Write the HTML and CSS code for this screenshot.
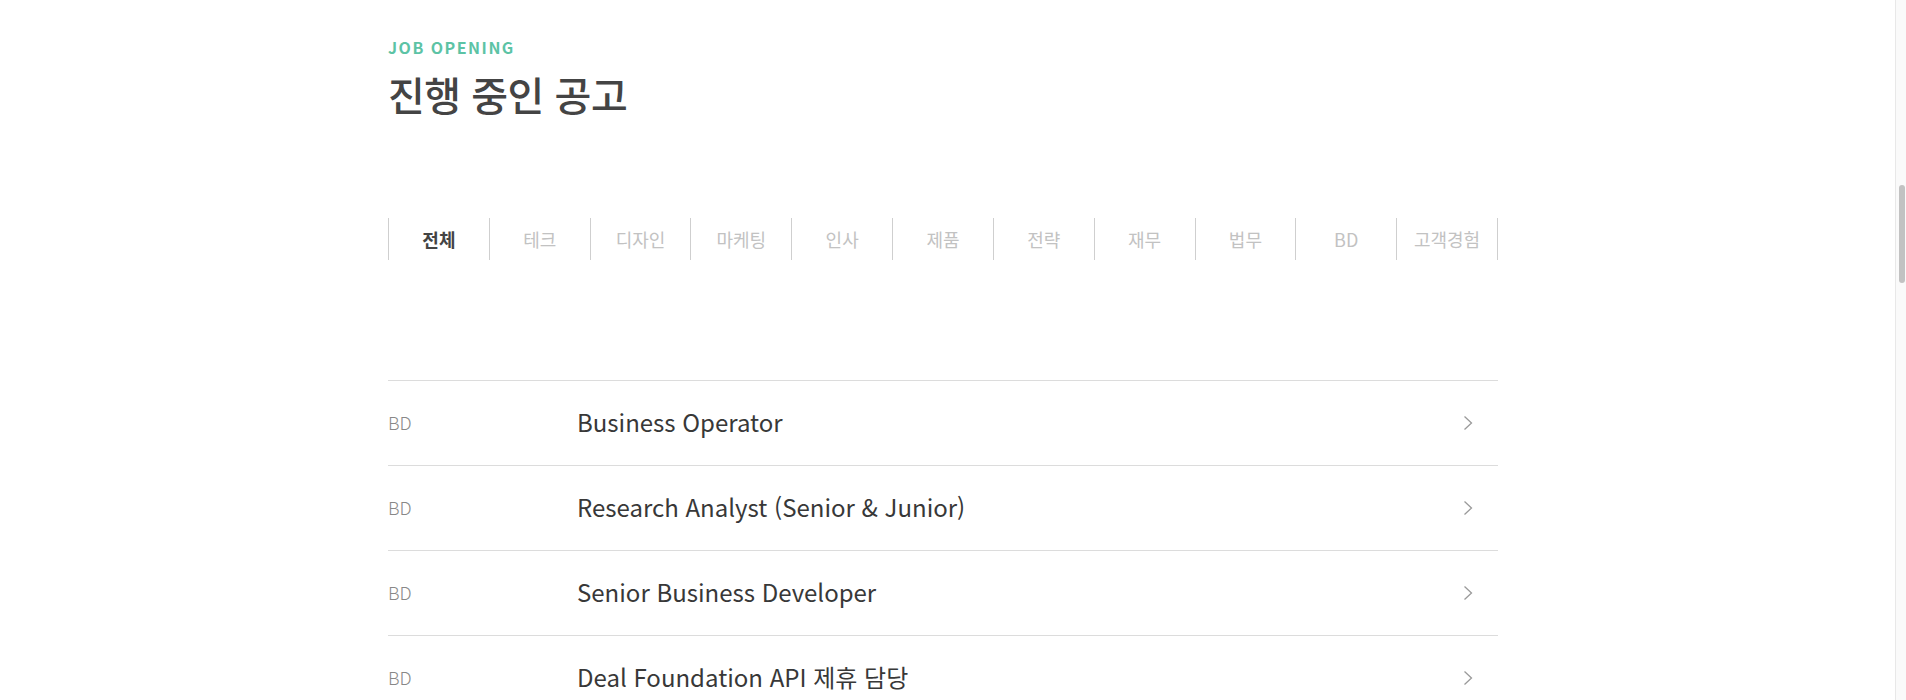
FILE: index.html
```html
<!DOCTYPE html>
<html lang="ko">
<head>
<meta charset="utf-8">
<title>진행 중인 공고</title>
<link rel="stylesheet" href="styles.css">
</head>
<body>
<div class="page">
  <section class="jobs">
    <p class="eyebrow">JOB OPENING</p>
    <h1 class="title">진행 중인 공고</h1>
    <nav class="tabs">
      <a class="tab active">전체</a>
      <a class="tab">테크</a>
      <a class="tab">디자인</a>
      <a class="tab">마케팅</a>
      <a class="tab">인사</a>
      <a class="tab">제품</a>
      <a class="tab">전략</a>
      <a class="tab">재무</a>
      <a class="tab">법무</a>
      <a class="tab">BD</a>
      <a class="tab">고객경험</a>
    </nav>
    <ul class="list">
      <li class="row"><span class="cat">BD</span><span class="name">Business Operator</span><svg class="chev" viewBox="0 0 10 16" width="10" height="16"><path d="M1.5 1.5l7 6.5-7 6.5" fill="none" stroke="#9a9a9a" stroke-width="1.3"/></svg></li>
      <li class="row"><span class="cat">BD</span><span class="name">Research Analyst (Senior &amp; Junior)</span><svg class="chev" viewBox="0 0 10 16" width="10" height="16"><path d="M1.5 1.5l7 6.5-7 6.5" fill="none" stroke="#9a9a9a" stroke-width="1.3"/></svg></li>
      <li class="row"><span class="cat">BD</span><span class="name">Senior Business Developer</span><svg class="chev" viewBox="0 0 10 16" width="10" height="16"><path d="M1.5 1.5l7 6.5-7 6.5" fill="none" stroke="#9a9a9a" stroke-width="1.3"/></svg></li>
      <li class="row"><span class="cat">BD</span><span class="name">Deal Foundation API 제휴 담당</span><svg class="chev" viewBox="0 0 10 16" width="10" height="16"><path d="M1.5 1.5l7 6.5-7 6.5" fill="none" stroke="#9a9a9a" stroke-width="1.3"/></svg></li>
    </ul>
  </section>
</div>
<div class="scrollbar"><div class="thumb"></div></div>
</body>
</html>
```
FILE: styles.css
```css
html, body {
  margin: 0;
  padding: 0;
  background: #fff;
  overflow: hidden;
  height: 700px;
}
body {
  font-family: "Noto Sans CJK KR", "Noto Sans", sans-serif;
  color: #333;
}
.page {
  width: 1886px;
}
.jobs {
  width: 1110px;
  margin: 0 auto;
  padding-top: 37px;
}
.eyebrow {
  margin: 0;
  font-size: 16px;
  line-height: 20px;
  font-weight: 700;
  color: #5cc3a5;
  letter-spacing: 1.5px;
}
.title {
  margin: 12px 0 0;
  font-size: 40px;
  line-height: 50px;
  font-weight: 500;
  color: #444;
  letter-spacing: -0.5px;
}
.tabs {
  display: flex;
  margin-top: 99px;
  border-right: 1px solid #cfcfcf;
}
.tab {
  flex: 1;
  height: 42px;
  display: flex;
  align-items: center;
  justify-content: center;
  border-left: 1px solid #cfcfcf;
  font-size: 18px;
  color: #c2c2c2;
}
.tab.active {
  color: #444;
  font-weight: 700;
}
.list {
  list-style: none;
  margin: 120px 0 0;
  padding: 0;
  border-top: 1px solid #dcdcdc;
}
.row {
  height: 84px;
  display: flex;
  align-items: center;
  border-bottom: 1px solid #dcdcdc;
  padding-right: 25px;
}
.cat {
  width: 189px;
  font-size: 18px;
  font-weight: 300;
  color: #888;
  margin-top: -3px;
}
.name {
  flex: 1;
  font-size: 24px;
  color: #383838;
  margin-top: -4px;
}
.chev {
  display: block;
}
.scrollbar {
  position: fixed;
  top: 0;
  right: 0;
  width: 10px;
  height: 700px;
  background: #fafafa;
  border-left: 1px solid #e8e8e8;
}
.thumb {
  position: absolute;
  top: 185px;
  left: 3px;
  width: 6px;
  height: 98px;
  border-radius: 3px;
  background: #c2c2c2;
}
```
